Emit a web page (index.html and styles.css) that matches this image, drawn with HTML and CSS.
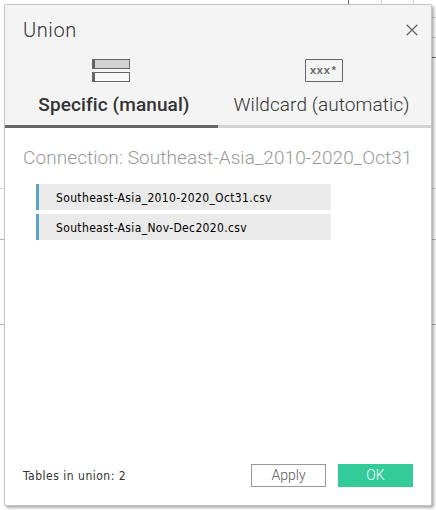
FILE: index.html
```html
<!DOCTYPE html>
<html lang="en">
<head>
<meta charset="utf-8">
<title>Union</title>
<link rel="stylesheet" href="styles.css">
</head>
<body>
<svg class="backdrop" width="436" height="510" aria-hidden="true" shape-rendering="crispEdges">
  <path d="M381.5 0V5M413.5 0V5M430 17.5h6M430 37.5h6M0 188.5h5M430 188.5h6" stroke="#d5d5d5"/>
  <path d="M0 239.5h5M430 239.5h6M0 324.5h5M430 324.5h6" stroke="#b4b4b4"/>
  <path d="M348.5 0V5M430 57.5h6" stroke="#666"/>
</svg>
<main class="dialog">
  <header class="header">
    <div class="titlebar">
      <h1 class="title">Union</h1>
      <button class="close" aria-label="Close">
        <svg width="12" height="12" viewBox="0 0 12 12"><path d="M.7.7l10.6 10.6M11.3.7L.7 11.3" stroke="#666" stroke-width="1.3"/></svg>
      </button>
    </div>
    <nav class="tabs">
      <button class="tab active">
        <svg width="38" height="23" viewBox="0 0 38 23" shape-rendering="crispEdges">
          <rect x=".5" y=".5" width="37" height="9" fill="#d2d2d2" stroke="#666"/>
          <rect x=".5" y="13.5" width="37" height="9" fill="#f8f8f8" stroke="#666"/>
          <path d="M0 0h3v10H0zM0 13h3v10H0z" fill="#666"/>
        </svg>
        <span class="label">Specific (manual)</span>
      </button>
      <button class="tab">
        <span class="pattern">xxx*</span>
        <span class="label">Wildcard (automatic)</span>
      </button>
    </nav>
  </header>
  <section class="content">
    <h2 class="connection">Connection: Southeast-Asia_2010-2020_Oct31</h2>
    <ul class="tables">
      <li>Southeast-Asia_2010-2020_Oct31.csv</li>
      <li>Southeast-Asia_Nov-Dec2020.csv</li>
    </ul>
  </section>
  <footer class="footer">
    <span class="count">Tables in union: 2</span>
    <button class="btn">Apply</button>
    <button class="btn primary">OK</button>
  </footer>
</main>
</body>
</html>
```
FILE: styles.css
```css
* { box-sizing: border-box; }
body {
  margin: 0;
  width: 436px;
  height: 510px;
  padding: 4px;
  overflow: hidden;
  background: #fff;
  font-family: Roboto, sans-serif;
  color: #333;
}
button {
  margin: 0;
  padding: 0;
  border: 0;
  background: none;
  font: inherit;
  color: inherit;
}
.backdrop { position: absolute; left: 0; top: 0; }
.dialog {
  position: relative;
  display: flex;
  flex-direction: column;
  width: 428px;
  height: 502px;
  background: #fff;
  border: 1px solid #c3c3c3;
  border-radius: 2px;
  box-shadow: 2px 2px 3px rgba(0, 0, 0, .32);
}
.header { height: 123px; background: #f4f4f4; }
.titlebar {
  display: flex;
  justify-content: space-between;
  height: 54px;
  padding: 13px 13px 0 18px;
}
.title {
  margin: 0;
  font-size: 20px;
  line-height: 24px;
  font-weight: 300;
  letter-spacing: .6px;
}
.close { width: 12px; height: 12px; margin-top: 6px; }
.close svg { display: block; }
.tabs { display: flex; height: 69px; }
.tab {
  display: flex;
  flex-direction: column;
  align-items: center;
  width: 213px;
  padding-right: 2px;
  border-bottom: 3px solid #d2d2d2;
  font-size: 19px;
  line-height: 24px;
  font-weight: 300;
  letter-spacing: .1px;
  white-space: nowrap;
}
.tab .label { margin-right: 4px; }
.tab.active { border-color: #666; font-weight: 500; }
.tab.active .label { margin: 0 0 0 7px; }
.tab svg, .pattern { flex: none; margin-bottom: 11px; }
.pattern {
  width: 38px;
  height: 23px;
  border: 1px solid #666;
  border-radius: 1px;
  text-align: center;
  font: bold 11px/23px "Liberation Mono", monospace;
  letter-spacing: .3px;
  color: #666;
}
.content { flex: 1; padding: 18px 18px 0; }
.connection {
  margin: 0;
  font-size: 19px;
  line-height: 24px;
  font-weight: 300;
  letter-spacing: .09px;
  white-space: nowrap;
  color: #999;
}
.tables {
  display: flex;
  flex-direction: column;
  gap: 4px;
  margin: 14px 0 0 13px;
  padding: 0;
  list-style: none;
}
.tables li {
  width: 295px;
  height: 26px;
  padding-left: 17px;
  border-left: 3px solid #5fa2c4;
  background: #eaeaea;
  font: 12px/28px "DejaVu Sans Condensed", "DejaVu Sans", sans-serif;
  font-stretch: condensed;
  letter-spacing: .35px;
  color: #000;
}
.footer { display: flex; align-items: center; gap: 12px; height: 60px; padding: 0 18px; }
.count {
  flex: 1;
  padding-top: 2px;
  font: 12px/16px "DejaVu Sans Condensed", "DejaVu Sans", sans-serif;
  font-stretch: condensed;
  letter-spacing: .5px;
}
.btn {
  width: 75px;
  height: 23px;
  border: 1px solid #999;
  font-size: 14px;
  line-height: 20px;
  font-weight: 300;
  color: #555;
}
.btn.primary { border-color: #3c9; background: #3c9; color: #fff; }
```
